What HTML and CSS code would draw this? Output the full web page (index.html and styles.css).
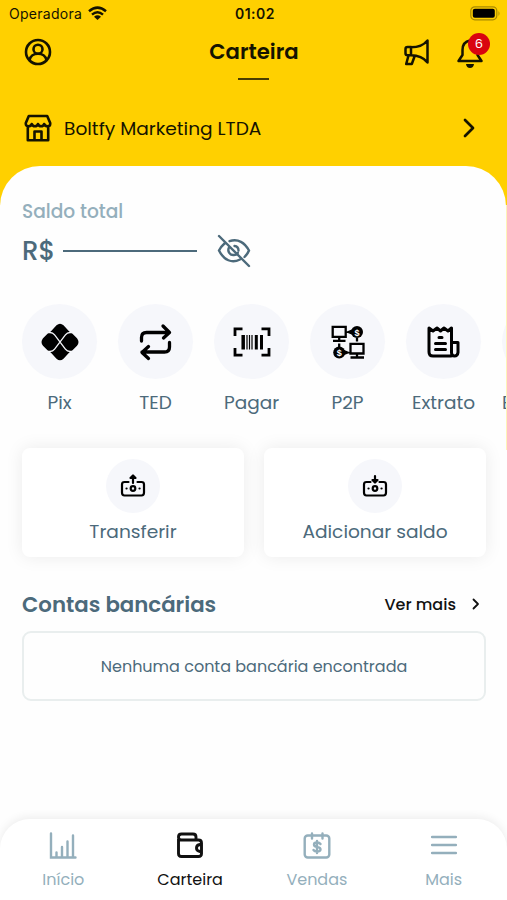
FILE: index.html
```html
<!DOCTYPE html>
<html lang="pt-BR">
<head>
<meta charset="utf-8">
<title>Carteira</title>
<link rel="stylesheet" href="styles.css">
</head>
<body>
<div class="screen">
  <div class="statusbar">
    <div class="carrier"><span class="t operator">Operadora</span>
      <svg width="19" height="15" viewBox="0 0 19 15" fill="none" stroke="#151300" stroke-width="2.500"><path d="M1 5.200Q9.500-2 18 5.200M4 8.600Q9.500 4 15 8.600"/><path d="M9.500 14L6 10.700Q9.500 8 13 10.700Z" fill="#151300" stroke="none"/></svg>
    </div>
    <span class="t clock">01:02</span>
    <svg class="battery" width="31" height="15" viewBox="0 0 31 15"><rect x=".8" y=".8" width="26" height="13" rx="4" fill="none" stroke="#a98a00" stroke-width="1.200"/><rect x="2.800" y="2.800" width="22" height="9" rx="2" fill="#000"/><path d="M28.500 5v5q2-2.500 0-5Z" fill="#a98a00"/></svg>
  </div>
  <header class="header">
    <svg width="28" height="28" viewBox="0 0 28 28" fill="none" stroke="#151300" stroke-width="2.600"><circle cx="14" cy="14" r="12"/><circle cx="14" cy="11.200" r="4.500"/><path d="M5.500 22.300C6.500 17.500 9.500 15.800 14 15.800s7.500 1.700 8.500 6.500"/></svg>
    <h1 class="t title">Carteira</h1>
    <div class="actions">
      <svg width="28" height="28" viewBox="0 0 28 28" fill="none" stroke="#151300" stroke-width="2.500" stroke-linejoin="round" stroke-linecap="round"><path d="M24.500 2.500v22C20.500 19.500 14.500 17.300 8 17.300V9.300c6.500 0 12.500-1.800 16.500-6.800ZM8 9H4.500q-2 0-2 2v4.200q0 2 2 2H8M5.500 17.500 3.200 26h5.600l3-8.200"/></svg>
      <div class="bell">
        <svg width="28" height="32" viewBox="0 0 28 32" fill="none" stroke="#151300" stroke-width="2.500" stroke-linejoin="round"><path d="M14 4.500C8.500 5.500 6.500 9 6.500 14v5L2.500 25h23l-4-6v-5c0-5-2-8.500-7.500-9.500Z"/><path d="M10 28h8q-.5 4-4 4t-4-4Z" fill="#151300" stroke="none"/></svg>
        <span class="badge">6</span>
      </div>
    </div>
  </header>
  <div class="underline"></div>
  <div class="account">
    <svg width="28" height="28" viewBox="0 0 28 28" fill="none" stroke="#151300" stroke-width="2.600" stroke-linejoin="round"><path d="M4.800 2h18.400L26.200 9v1c0 3-5 3-6 0-1 3-5.200 3-6.200 0-1 3-5.200 3-6.200 0-1 3-6 3-6 0V9ZM3.800 12v14.200h20.400V12M10.500 26v-8.500h7V26"/></svg>
    <span class="t company">Boltfy Marketing LTDA</span>
    <svg width="14" height="20" viewBox="0 0 14 20" fill="none" stroke="#151300" stroke-width="2.700" stroke-linecap="round" stroke-linejoin="round"><path d="M3 2l8 8-8 8"/></svg>
  </div>
  <main class="panel">
    <div class="t balance-label">Saldo total</div>
    <div class="balance"><span class="t currency">R$</span><i class="mask"></i>
      <svg width="34" height="34" viewBox="0 0 34 34" fill="none" stroke="#4c6a7b" stroke-width="2.400" stroke-linecap="round"><path d="M2 2l30 30M12.500 7.200C21 4 28 9 32 16.500q-1.500 3.500-4.500 6.500M7.500 9.500Q4 12.500 2 16.500c5 10 13 13 21 9"/><path d="M12 13.500c-2 4 1 8 5 7.500 1.500 0 3-.8 3.800-2.200M17.500 12q4 .5 4 4.500"/></svg>
    </div>
    <nav class="shortcuts">
      <div class="shortcut"><div class="disc"><svg width="38" height="38" viewBox="0 0 38 38"><path d="M15.500 2.200q3.500-3 7 0l5.500 6q1.500 1.300 3 2l5 5q3 3.800 0 7.600l-5 5q-1.500.7-3 2l-5.500 6q-3.500 3-7 0l-5.500-6q-1.500-1.300-3-2l-5-5q-3-3.800 0-7.600l5-5q1.500-.7 3-2Z"/><path d="M6 9.500h3q2.800 0 4.600 2.300L24.400 26.200q1.800 2.300 4.600 2.300h3M32 9.500h-3q-2.800 0-4.600 2.300L13.600 26.200Q11.800 28.500 9 28.500H6" fill="none" stroke="#f6f7fb" stroke-width="1.300"/></svg></div><span class="t">Pix</span></div>
      <div class="shortcut"><div class="disc"><svg width="38" height="38" viewBox="0 0 38 38" fill="none" stroke="#000" stroke-width="3.300" stroke-linecap="round" stroke-linejoin="round"><path d="M4.500 18v-3.500q0-5 5-5H32M26 3l6.500 6.500-6 5.500M32.500 19.500V24q0 5-5 5H5M11.500 23.500 5 29.500l6.500 6"/></svg></div><span class="t">TED</span></div>
      <div class="shortcut"><div class="disc"><svg width="38" height="38" viewBox="0 0 38 38" fill="none" stroke="#000" stroke-width="2.800"><path d="M2 13V5.800h7.500M28.500 5.800H36V13M36 25v7.200h-7.500M9.500 32.200H2V25"/><path d="M10.200 12v14.500" stroke-width="3.500"/><path d="M14 12v14.500M16.500 12v14.500M19 12v14.500" stroke-width="1.200"/><path d="M23.300 12v14.500M28.500 12v14.500" stroke-width="3"/></svg></div><span class="t">Pagar</span></div>
      <div class="shortcut"><div class="disc"><svg width="38" height="38" viewBox="0 0 38 38" fill="none" stroke="#000" stroke-width="2.300"><path d="M3.700 3.800h13v10h-13ZM10.200 13.800v4M4 17.800h12.500M21.500 20.800h13v9.700h-13ZM28 30.500v4M21.500 34.500h13.500M28 15v3.500M10.200 20.500V25M19.500 9l4-1.500v3ZM18.500 29.500l-4-1.500v3Z"/><circle cx="28" cy="9" r="6" fill="#000" stroke="none"/><circle cx="10.200" cy="29.500" r="6" fill="#000" stroke="none"/><text class="coin" x="28" y="12.500">$</text><text class="coin" x="10.200" y="33">$</text></svg></div><span class="t">P2P</span></div>
      <div class="shortcut"><div class="disc"><svg width="38" height="38" viewBox="0 0 38 38" fill="none" stroke="#000" stroke-width="3" stroke-linejoin="round" stroke-linecap="round"><path d="M26 33H8q-4 0-4-4V5l4 3 4-3 3.500 3L19 5l4 3 3.500-3v24.500q0 3.500 3 3.500t3.500-3.500V19.500h-6.500M14 14.500h3M10.500 20.500h10M10.500 26.500h10"/></svg></div><span class="t">Extrato</span></div>
      <div class="shortcut next"><div class="disc"></div><span class="t">E</span></div>
    </nav>
    <div class="cards">
      <div class="card"><div class="disc small"><svg width="26" height="26" viewBox="0 0 26 26" fill="none" stroke="#000" stroke-width="2.200" stroke-linejoin="round" stroke-linecap="round"><path d="M8.500 9H4.500Q2 9 2 11.500v8Q2 22.500 4.500 22.500h17q2.500 0 2.500-3v-8Q24 9 21.500 9h-4M13 10V4M10.500 5 13 2.500 15.500 5Z"/><circle cx="13" cy="15.500" r="2.300"/><path d="M6.500 15.500h.1M19.500 15.500h.1"/></svg></div><span class="t">Transferir</span></div>
      <div class="card"><div class="disc small"><svg width="26" height="26" viewBox="0 0 26 26" fill="none" stroke="#000" stroke-width="2.200" stroke-linejoin="round" stroke-linecap="round"><path d="M8.500 9H4.500Q2 9 2 11.500v8Q2 22.500 4.500 22.500h17q2.500 0 2.500-3v-8Q24 9 21.500 9h-4M13 3v5M10.500 7 13 9.500 15.500 7Z"/><circle cx="13" cy="15.500" r="2.300"/><path d="M6.500 15.500h.1M19.500 15.500h.1"/></svg></div><span class="t">Adicionar saldo</span></div>
    </div>
    <div class="section-head"><h2 class="t">Contas bancárias</h2><div class="more"><span class="t">Ver mais</span><svg width="10" height="14" viewBox="0 0 10 14" fill="none" stroke="#111" stroke-width="1.800" stroke-linecap="round" stroke-linejoin="round"><path d="M2.500 2.500 7 7l-4.500 4.500"/></svg></div></div>
    <div class="empty"><span class="t">Nenhuma conta bancária encontrada</span></div>
  </main>
  <nav class="tabbar">
    <div class="tab"><svg width="28" height="28" viewBox="0 0 28 28" fill="none" stroke="#94afbc" stroke-width="2.400" stroke-linecap="round"><path d="M2 1.500V25.500h24.500M7.500 20.500v4M13 15v10M18.500 9.500v15M24 3.500v21"/></svg><span class="t">Início</span></div>
    <div class="tab active"><svg width="28" height="28" viewBox="0 0 28 28" fill="none" stroke="#111" stroke-width="2.900" stroke-linejoin="round"><path d="M2.500 7V21.500q0 3 3 3h17q3 0 3-3V11q0-3-3-3H5.500Q2.500 8 2.500 5t3-3H17q3 0 3 3v3M25.500 12.500H24q-3.500.5-3.500 3.500T24 19.500h1.500"/></svg><span class="t">Carteira</span></div>
    <div class="tab"><svg width="28" height="28" viewBox="0 0 28 28" fill="none" stroke="#94afbc" stroke-width="2.400" stroke-linecap="round"><rect x="1.700" y="3.500" width="24.600" height="22" rx="3"/><path d="M9 1.500v5M19.500 1.500v5M17.500 12q-1-1.500-3.500-1.500-3 0-3 2.100t3 2.300q3.500.4 3.500 2.500T14 19.500q-2.500 0-3.500-1.500M14 9v12"/></svg><span class="t">Vendas</span></div>
    <div class="tab"><svg width="28" height="28" viewBox="0 0 28 28" fill="none" stroke="#94afbc" stroke-width="2.600" stroke-linecap="round"><path d="M2.200 5h23.600M2.200 13h23.600M2.200 21h23.600"/></svg><span class="t">Mais</span></div>
  </nav>
</div>
</body>
</html>
```
FILE: styles.css
```css
* { box-sizing: border-box; }
body { margin: 0; font-family: Poppins, Inter, sans-serif; color: #151300; }
h1, h2 { margin: 0; }
svg { display: block; flex: none; }
.t { white-space: nowrap; }
.screen { width: 507px; height: 900px; overflow: hidden; display: flex; flex-direction: column; background: linear-gradient(#ffd000 205px, #fff3b8 205px, #fff3b8 450px, #fefefe 450px); }
.statusbar { height: 28px; flex: none; display: grid; grid-template-columns: 1fr auto 1fr; align-items: center; padding: 0 6px 1px 9px; font-family: Inter, sans-serif; }
.carrier { display: flex; align-items: center; gap: 6px; }
.operator { font-size: 14px; letter-spacing: .28px; }
.clock { font-size: 14px; font-weight: 600; letter-spacing: .5px; }
.battery { justify-self: end; }
.header { height: 48px; flex: none; display: grid; grid-template-columns: 1fr auto 1fr; align-items: center; padding: 0 23px 0 24px; }
.title { font-size: 21.2px; font-weight: 600; line-height: 32px; }
.actions { display: flex; justify-content: flex-end; align-items: center; gap: 25px; }
.bell { position: relative; }
.badge { position: absolute; left: 12px; top: -3px; width: 22px; height: 22px; border-radius: 50%; background: #d9040f; color: #fff; font-size: 13px; line-height: 22px; text-align: center; }
.underline { width: 31px; height: 2px; margin: 2px 0 0 238px; background: #4a3d00; flex: none; }
.account { height: 86px; flex: none; display: flex; align-items: center; padding: 10px 31px 0 24px; }
.company { flex: 1; margin-left: 12px; font-size: 18.6px; }
.panel { flex: 1; min-height: 0; margin-right: 1px; background: #fefefe; border-radius: 40px 40px 0 0; padding: 33px 20px 0 22px; color: #4c6a7b; }
.balance-label { height: 26px; line-height: 26px; font-size: 18.6px; font-weight: 500; color: #94afbc; }
.balance { height: 52px; display: flex; align-items: center; }
.currency { font-size: 26px; font-weight: 500; width: 41px; }
.mask { width: 134px; height: 2px; background: #4c6a7b; margin-right: 20px; }
.shortcuts { display: flex; gap: 21px; margin: 27px -20px 0 0; overflow: hidden; }
.shortcut { width: 75px; flex: none; display: flex; flex-direction: column; align-items: center; font-size: 18.5px; line-height: 28px; }
.shortcut.next { align-items: flex-start; }
.disc { width: 75px; height: 75px; border-radius: 50%; background: #f6f7fb; display: flex; align-items: center; justify-content: center; margin-bottom: 10px; }
.coin { font: bold 9px "Liberation Sans", sans-serif; fill: #fff; stroke: none; text-anchor: middle; }
.cards { display: grid; grid-template-columns: 1fr 1fr; gap: 20px; margin-top: 31px; }
.card { height: 109px; border-radius: 8px; background: #fff; box-shadow: 0 0 18px rgba(0, 0, 0, .08); padding-top: 11px; display: flex; flex-direction: column; align-items: center; font-size: 18.6px; line-height: 28px; }
.disc.small { width: 54px; height: 54px; margin-bottom: 5px; }
.section-head { display: flex; justify-content: space-between; align-items: center; height: 32px; margin-top: 31px; }
.section-head h2 { font-size: 21.3px; font-weight: 600; }
.more { display: flex; align-items: center; gap: 15px; color: #111; font-size: 16px; font-weight: 500; padding-right: 5px; }
.empty { height: 70px; margin-top: 11px; border: 2px solid #e9eeee; border-radius: 9px; display: flex; align-items: center; justify-content: center; font-size: 16px; }
.tabbar { height: 81px; flex: none; display: grid; grid-template-columns: repeat(4, 1fr); background: #fff; border-radius: 30px 30px 0 0; box-shadow: 0 -2px 10px rgba(0, 0, 0, .07); padding-top: 13px; }
.tab { display: flex; flex-direction: column; align-items: center; color: #94afbc; font-size: 16px; line-height: 24px; gap: 8px; }
.tab.active { color: #111; }
```
